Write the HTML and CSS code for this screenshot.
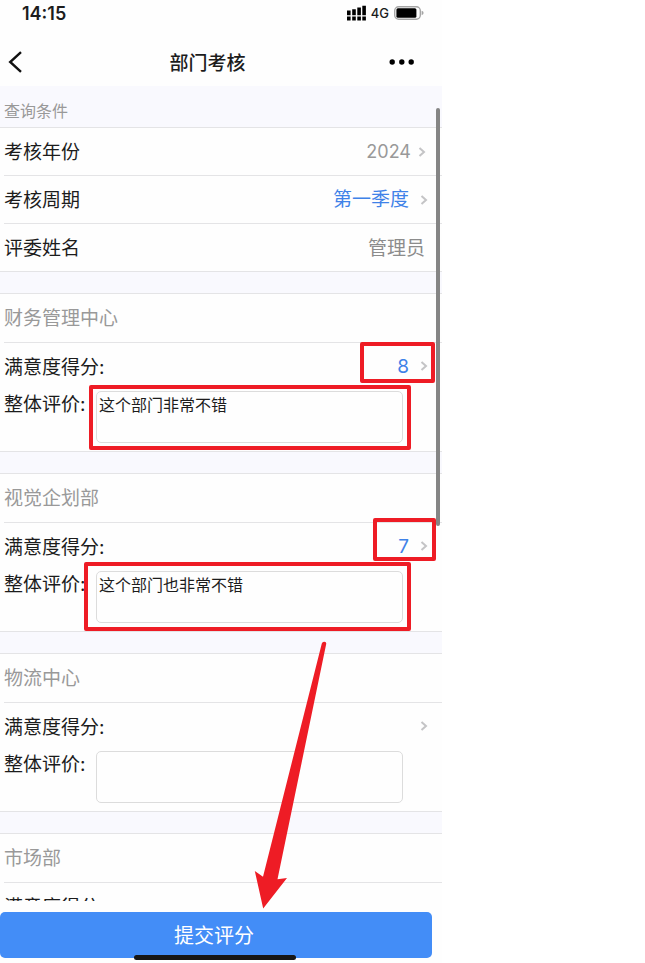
FILE: index.html
```html
<!DOCTYPE html>
<html lang="zh-CN">

<head>
    <meta charset="UTF-8">
    <meta name="viewport" content="width=device-width, initial-scale=1.0">
    <title>部门考核</title>
    <link rel="stylesheet" href="styles.css">
</head>

<body>
    <div class="phone">
        <div class="status">
            <span class="time">14:15</span>
            <div class="status-icons">
                <svg width="19" height="16" viewBox="0 0 19 16">
                    <path d="M0 5.500h3.600v4.800H0zM5.200 4.200h3.600v6.100H5.200zM10.300 2.500h3.600v7.800h-3.600zM15.300 .8h3.600v9.500h-3.600zM0 11.500h3.600v3.900H0zM5.200 11.500h3.600v3.900H5.200zM10.300 11.500h3.600v3.900h-3.600zM15.300 11.500h3.600v3.900h-3.600z"/>
                </svg>
                <span class="network">4G</span>
                <svg width="30" height="14" viewBox="0 0 30 14">
                    <rect x="0.7" y="0.7" width="25.6" height="12.6" rx="4" fill="none" stroke="#a5a5a5" stroke-width="1.4"/>
                    <rect x="2.400" y="2.200" width="20" height="9.600" rx="1.500"/>
                    <path d="M27.600 4.800q2 .6 2 2.200t-2 2.200z" fill="#a5a5a5"/>
                </svg>
            </div>
        </div>

        <header class="nav">
            <button class="nav-btn" type="button" aria-label="返回">
                <svg width="14" height="22" viewBox="0 0 14 22" fill="none" stroke="#111" stroke-width="2.4">
                    <path d="M13 1.200L2.200 11 13 20.800"/>
                </svg>
            </button>
            <h1>部门考核</h1>
            <button class="nav-btn nav-more" type="button" aria-label="更多">
                <svg width="26" height="6" viewBox="0 0 26 6">
                    <circle cx="3.200" cy="3" r="2.700"/>
                    <circle cx="12.800" cy="3" r="2.700"/>
                    <circle cx="22.200" cy="3" r="2.700"/>
                </svg>
            </button>
        </header>

        <main class="content">
            <h2 class="section-title">查询条件</h2>
            <div class="group">
                <div class="row year">
                    <label for="year">考核年份</label>
                    <select id="year">
                        <option>2024</option>
                    </select>
                    <svg class="arrow" viewBox="0 0 8 10"><path d="M1.500 1l4.500 4-4.500 4"/></svg>
                </div>
                <div class="row">
                    <label for="period">考核周期</label>
                    <select id="period">
                        <option>第一季度</option>
                    </select>
                    <svg class="arrow" viewBox="0 0 8 10"><path d="M1.500 1l4.500 4-4.500 4"/></svg>
                </div>
                <div class="row">
                    <span>评委姓名</span>
                    <span class="value">管理员</span>
                </div>
            </div>

            <section class="group">
                <h3>财务管理中心</h3>
                <div class="score">
                    <label for="score1">满意度得分:</label>
                    <select id="score1">
                        <option>8</option>
                    </select>
                    <svg class="arrow" viewBox="0 0 8 10"><path d="M1.500 1l4.500 4-4.500 4"/></svg>
                </div>
                <div class="comment">
                    <label for="comment1">整体评价:</label>
                    <textarea id="comment1">这个部门非常不错</textarea>
                </div>
            </section>

            <section class="group">
                <h3>视觉企划部</h3>
                <div class="score">
                    <label for="score2">满意度得分:</label>
                    <select id="score2">
                        <option>7</option>
                    </select>
                    <svg class="arrow" viewBox="0 0 8 10"><path d="M1.500 1l4.500 4-4.500 4"/></svg>
                </div>
                <div class="comment">
                    <label for="comment2">整体评价:</label>
                    <textarea id="comment2">这个部门也非常不错</textarea>
                </div>
            </section>

            <section class="group">
                <h3>物流中心</h3>
                <div class="score">
                    <label for="score3">满意度得分:</label>
                    <select id="score3">
                        <option></option>
                    </select>
                    <svg class="arrow" viewBox="0 0 8 10"><path d="M1.500 1l4.500 4-4.500 4"/></svg>
                </div>
                <div class="comment">
                    <label for="comment3">整体评价:</label>
                    <textarea id="comment3"></textarea>
                </div>
            </section>

            <section class="group">
                <h3>市场部</h3>
                <div class="score">
                    <label for="score4">满意度得分:</label>
                    <select id="score4">
                        <option></option>
                    </select>
                </div>
            </section>
        </main>

        <footer class="footer">
            <button class="submit" type="button">提交评分</button>
        </footer>

        <div class="scrollbar"></div>
        <div class="home-bar"></div>

        <svg class="marks" width="442" height="963" viewBox="0 0 442 963">
            <g fill="none" stroke="#ee1c25" stroke-width="4" stroke-linejoin="round">
                <rect x="362" y="344" width="71" height="37"/>
                <rect x="91" y="387" width="318" height="61"/>
                <rect x="375" y="520" width="59" height="39"/>
                <rect x="86" y="564" width="323" height="65"/>
            </g>
            <path fill="#ee1c25" d="M321.800 643.500q.6-2 2.600-1.800 2.200.2 1.800 2.300L277.500 879.300l9.500-1.300-23.800 30.500L254.800 871l8.200 5.700z"/>
        </svg>
    </div>
</body>

</html>
```
FILE: styles.css
```css
* {
    box-sizing: border-box;
}

body {
    margin: 0;
    background: #fff;
    color: #1c1c1c;
    font-family: Inter, "Noto Sans CJK SC", sans-serif;
    font-size: 19px;
}

h1,
h2,
h3 {
    margin: 0;
    font-weight: 400;
}

button,
select,
textarea {
    font-family: inherit;
    border: none;
    background: none;
    padding: 0;
}

.phone {
    position: relative;
    display: flex;
    flex-direction: column;
    max-width: 442px;
    height: 100vh;
    background: #fefefe;
    overflow: hidden;
}

/* status bar */
.status {
    display: flex;
    justify-content: space-between;
    align-items: center;
    height: 38px;
    padding: 0 18px 12px 22px;
}

.time {
    font-size: 18px;
    font-weight: 600;
}

.status-icons {
    display: flex;
    align-items: center;
    gap: 5px;
}

.network {
    font-size: 13px;
    font-weight: 500;
}

/* title bar */
.nav {
    display: flex;
    justify-content: space-between;
    align-items: center;
    height: 48px;
    padding: 0 27px 0 8px;
}

.nav h1 {
    padding: 0 8px 2px 0;
    font-size: 19px;
    font-weight: 500;
}

.nav-btn {
    display: flex;
    align-items: center;
    width: 26px;
    height: 44px;
}

/* list */
.content {
    flex: 1;
    min-height: 0;
    overflow: hidden;
    background: #f9f9fe;
}

.section-title {
    height: 41px;
    padding: 0 4px;
    font-size: 16px;
    line-height: 50px;
    color: #999;
}

.group {
    margin-bottom: 21px;
    border-top: 1px solid #e4e4e6;
    border-bottom: 1px solid #e4e4e6;
    background: #fefefe;
}

.row,
.score {
    display: flex;
    align-items: center;
    padding-right: 14px;
    margin-left: 4px;
}

.row label,
.row span,
.score label {
    padding-bottom: 2px;
}

.row {
    height: 48px;
    border-bottom: 1px solid #e4e4e6;
}

.row:last-child {
    height: 47px;
    border-bottom: none;
}

.score {
    height: 46px;
}

select {
    flex: 1;
    min-width: 0;
    height: 40px;
    appearance: none;
    font-size: 19px;
    text-align: right;
    text-align-last: right;
    color: #3f82e8;
}

.arrow {
    width: 8px;
    height: 10px;
    margin-left: 11px;
    fill: none;
    stroke: #c4c4c6;
    stroke-width: 2;
}

.year {
    padding-right: 16px;
}

.year select {
    font-size: 18px;
    color: #999;
}

.year .arrow {
    margin-left: 7px;
}

.value {
    margin-left: auto;
    padding-right: 3px;
    color: #8c8c8c;
}

.group h3 {
    height: 49px;
    margin-left: 4px;
    border-bottom: 1px solid #e4e4e6;
    font-size: 19px;
    line-height: 50px;
    color: #999;
}

.comment {
    display: flex;
    padding: 2px 39px 8px 4px;
}

.comment label {
    width: 92px;
    line-height: 28px;
}

textarea {
    flex: 1;
    min-width: 0;
    height: 52px;
    padding: 2px;
    border: 1px solid #dcdcdc;
    border-radius: 5px;
    font-size: 16px;
    line-height: 22px;
    color: #1c1c1c;
    resize: none;
}

/* submit */
.footer {
    padding: 11px 10px 5px 0;
}

.submit {
    display: block;
    width: 100%;
    height: 46px;
    padding: 0 4px 2px 0;
    border-radius: 5px;
    background: #438df7;
    color: #fff;
    font-size: 20px;
}

.scrollbar {
    position: absolute;
    top: 108px;
    right: 2px;
    width: 4px;
    height: 418px;
    border-radius: 2px;
    background: #858585;
}

.home-bar {
    position: absolute;
    bottom: 3px;
    left: 134px;
    width: 162px;
    height: 5px;
    border-radius: 3px;
    background: #161616;
}

.marks {
    position: absolute;
    top: 0;
    left: 0;
    pointer-events: none;
}
```
